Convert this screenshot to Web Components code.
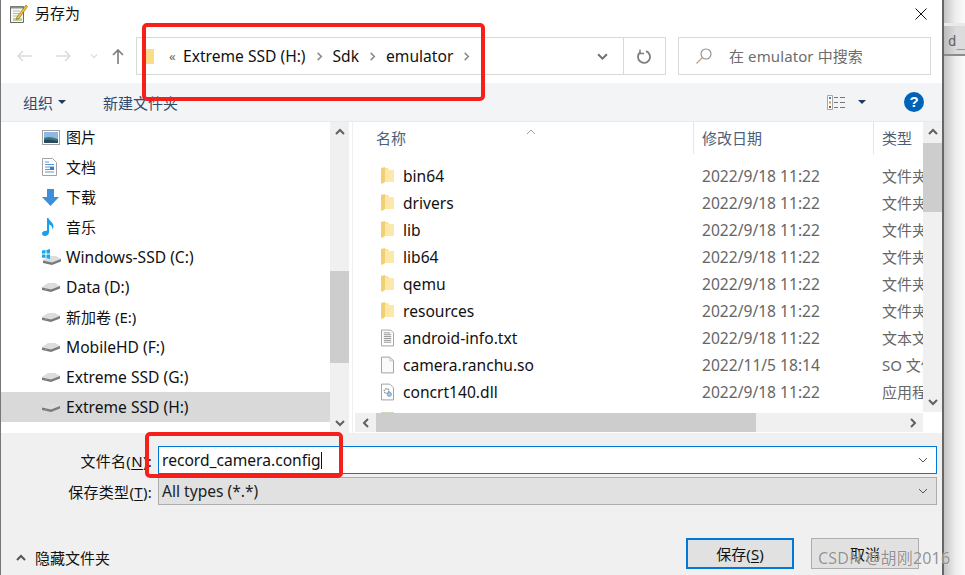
<!DOCTYPE html>
<html lang="zh">
<head>
<meta charset="utf-8">
<title>另存为</title>
<style>
  html, body { margin: 0; height: 100%; background: #fff; overflow: hidden; }
  body { font: 15.6px "Noto Sans", "Noto Sans CJK SC", sans-serif; color: #111; }
</style>
</head>
<body>
<save-dialog>
  <title-bar slot="title">另存为</title-bar>
  <nav-bar slot="nav"></nav-bar>
  <tool-bar slot="tools"></tool-bar>
  <nav-pane slot="pane">
    <nav-item cjk icon="picture">图片</nav-item>
    <nav-item cjk icon="doc">文档</nav-item>
    <nav-item cjk icon="download">下载</nav-item>
    <nav-item cjk icon="music">音乐</nav-item>
    <nav-item icon="windrive">Windows-SSD (C:)</nav-item>
    <nav-item icon="drive">Data (D:)</nav-item>
    <nav-item cjk icon="drive">新加卷 (E:)</nav-item>
    <nav-item icon="drive">MobileHD (F:)</nav-item>
    <nav-item icon="drive">Extreme SSD (G:)</nav-item>
    <nav-item icon="drive" selected>Extreme SSD (H:)</nav-item>
  </nav-pane>
  <file-list slot="files">
    <file-row icon="folder" date="2022/9/18 11:22" kind="文件夹">bin64</file-row>
    <file-row icon="folder" date="2022/9/18 11:22" kind="文件夹">drivers</file-row>
    <file-row icon="folder" date="2022/9/18 11:22" kind="文件夹">lib</file-row>
    <file-row icon="folder" date="2022/9/18 11:22" kind="文件夹">lib64</file-row>
    <file-row icon="folder" date="2022/9/18 11:22" kind="文件夹">qemu</file-row>
    <file-row icon="folder" date="2022/9/18 11:22" kind="文件夹">resources</file-row>
    <file-row icon="text" date="2022/9/18 11:22" kind="文本文档">android-info.txt</file-row>
    <file-row icon="blank" date="2022/11/5 18:14" kind="SO 文件">camera.ranchu.so</file-row>
    <file-row icon="dll" date="2022/9/18 11:22" kind="应用程序扩展">concrt140.dll</file-row>
    <file-row icon="exe"></file-row>
  </file-list>
  <save-form slot="form"></save-form>
</save-dialog>

<script>
// icons are all drawn on small local grids, the size comes from the viewBox
const ICONS = {
  picture: '<svg width="18" height="15" viewBox="0 0 18 15"><rect x=".5" y=".5" width="17" height="14" fill="#fff" stroke="#a3a3a3"/><rect x="2" y="2" width="14" height="11" fill="#8fb9e4"/><path d="M2 8c4-2 8-1 14 1v4H2z" fill="#3c7a73"/><path d="M2 10c4-1 9 0 14 1v2H2z" fill="#28495f"/></svg>',
  doc: '<svg width="15" height="18" viewBox="0 0 15 18"><path d="M.5.5h10l4 4v13H.5z" fill="#fff" stroke="#a3a3a3"/><path d="M3 4h4M3 6.5h9M3 9h9M3 11.5h9M3 14h9" stroke="#5b9bd5"/><path d="M8 9h4v3H8z" fill="#2f7fc9"/></svg>',
  download: '<svg width="17" height="17" viewBox="0 0 17 17"><path d="M5 0h7v8h5l-8.500 9L0 8h5z" fill="#3d8fdb"/></svg>',
  music: '<svg width="13" height="18" viewBox="0 0 13 18"><path d="M5 0h1.500c.5 3 5 4 5 8.500 0 1-.3 2-1 3 .2-3-2-4.500-3.500-5V14c0 2.500-2 4-4 4S0 17 0 15.500 2 12.500 5 12.800z" fill="#18a0ed"/></svg>',
  drive: '<svg width="18" height="10" viewBox="0 0 18 10"><path d="M0 5l6-4h7l5 3v2l-9 3-9-2z" fill="#dcdcdc"/><path d="M0 5.500l9 2 9-3.500v2.500L9 10 0 8z" fill="#7a7a7a"/><path d="M3 7.300l2 .4" stroke="#5fbf57"/></svg>',
  windrive: '<svg width="19" height="16" viewBox="0 0 19 16"><path d="M1 11l6-4h7l5 3v2l-9 3-9-2z" fill="#dcdcdc"/><path d="M1 11.500l9 2 9-3.500v2.500L10 16l-9-2z" fill="#7a7a7a"/><path d="M0 1.500l3.500-.5v3.500H0zM4.500 1L8 0v4.500H4.500zM0 5.500h3.500V9L0 8.500zM4.500 5.500H8V10l-3.500-1z" fill="#14a6ee"/></svg>',
  folder: '<svg width="13" height="17" viewBox="0 0 13 17"><path d="M0 1l4-1v15l-3 2-1-1z" fill="#f3cf72"/><path d="M4 1h3l1 2h5v12H4z" fill="#fbe29b"/><path d="M4 3h9v12H4z" fill="#fde8ac"/></svg>',
  text: '<svg width="14" height="18" viewBox="0 0 14 18"><path d="M.5.500h10l3 3v14H.5z" fill="#fff" stroke="#9a9a9a"/><path d="M3 3.500h7M3 5.500h8M3 7.500h8M3 9.500h8M3 11.500h8M3 13.500h8" stroke="#8d8d8d"/></svg>',
  blank: '<svg width="14" height="18" viewBox="0 0 14 18"><path d="M.5.500h9l4 4v13H.5z" fill="#f9fafb" stroke="#9a9a9a"/><path d="M9.500.500v4h4" fill="none" stroke="#c4c4c4"/></svg>',
  dll: '<svg width="14" height="18" viewBox="0 0 14 18"><path d="M.5.500h9l4 4v13H.5z" fill="#fff" stroke="#9a9a9a"/><circle cx="6" cy="8" r="2.500" fill="none" stroke="#8f8f8f" stroke-width="1.500" stroke-dasharray="1.500 .8"/><circle cx="9" cy="11.500" r="2.200" fill="#a7cbe8" stroke="#6f97b8"/></svg>',
  exe: '<svg width="18" height="17" viewBox="0 0 18 17"><path d="M0 0h18v17H0z" fill="#a9c78d"/></svg>',
  notepad: '<svg width="18" height="19" viewBox="0 0 18 19"><path d="M.5 2.500h13v16H.5z" fill="#f7f7ef" stroke="#6a6a6a"/><path d="M1 2.500h12v2H1z" fill="#8a8f8a"/><path d="M3 14h9v3H3z" fill="#b9d79b"/><path d="M3 7h7M3 9.500h6M3 12h5" stroke="#b9b9b9"/><path d="M7 13l9-12 1.500 1.500-8.500 12-3 1z" fill="#f4c430" stroke="#8a6d1c" stroke-width=".7"/></svg>',
  close: '<svg width="12" height="12" viewBox="0 0 12 12"><path d="M.5.500l11 11M11.500.500l-11 11" stroke="#111" fill="none"/></svg>',
  back: '<svg width="15" height="12" viewBox="0 0 15 12"><path d="M15 6H1M6 1L1 6l5 5" stroke="#dbdbdb" stroke-width="1.500" fill="none"/></svg>',
  forward: '<svg width="15" height="12" viewBox="0 0 15 12"><path d="M0 6h14M9 1l5 5-5 5" stroke="#dbdbdb" stroke-width="1.500" fill="none"/></svg>',
  up: '<svg width="12" height="15" viewBox="0 0 12 15"><path d="M6 15V1M1 6l5-5 5 5" stroke="#7a7a7a" stroke-width="1.600" fill="none"/></svg>',
  refresh: '<svg width="15" height="15" viewBox="0 0 15 15"><path d="M9 2.200A6 6 0 1 1 3.500 3" stroke="#7f7f7f" stroke-width="1.800" fill="none"/><path d="M3 .5v4h4" stroke="#7f7f7f" stroke-width="1.400" fill="none"/></svg>',
  search: '<svg width="16" height="16" viewBox="0 0 16 16"><circle cx="10" cy="6" r="5" fill="none" stroke="#8a8a8a" stroke-width="1.100"/><path d="M6.500 9.500L.5 15.500" stroke="#c9a27a" stroke-width="1.200"/></svg>',
  views: '<svg width="18" height="15" viewBox="0 0 18 15"><path d="M.5.500h5v14h-5z" fill="#fff" stroke="#a5a5a5"/><path d="M2 2h2v2H2z" fill="#4a7fb5"/><path d="M2 6.500h2v2H2z" fill="#b9a030"/><path d="M2 11h2v2H2z" fill="#c0483a"/><path d="M7 2.500h4M13 2.500h5M7 7.500h4M13 7.500h5M7 12.500h4M13 12.500h5" stroke="#777"/></svg>'
};

// chevrons share one path, the direction is a rotation
function chevron(dir, color = '#606060', size = 10, width = 2) {
  const turn = { up: 0, right: 90, down: 180, left: 270 }[dir];
  return `<svg width="${size}" height="${size}" viewBox="0 0 10 10" style="transform:rotate(${turn}deg)"><path d="M1 7l4-4 4 4" fill="none" stroke="${color}" stroke-width="${width}"/></svg>`;
}

function component(tag, html, setup) {
  const template = document.createElement('template');
  template.innerHTML = html;
  customElements.define(tag, class extends HTMLElement {
    connectedCallback() {
      if (this.shadowRoot) return;
      const root = this.attachShadow({ mode: 'open' });
      root.appendChild(template.content.cloneNode(true));
      if (setup) setup(root, this);
    }
  });
}

component('ui-icon', `
  <style>:host { display: inline-flex; flex: none; align-items: center; justify-content: center; } svg { display: block; }</style>
  <span id="s" style="display:contents"></span>
`, (root, el) => {
  root.getElementById('s').innerHTML = ICONS[el.getAttribute('name')] || '';
});

component('scroll-bar', `
  <style>
    :host { display: flex; flex: none; background: #f0f0f0; }
    :host([axis=v]) { flex-direction: column; width: 19px; }
    :host([axis=h]) { flex-direction: row; height: 19px; }
    .btn { flex: none; display: flex; align-items: center; justify-content: center; }
    :host([axis=v]) .btn { height: 20px; }
    :host([axis=h]) .btn { width: 21px; }
    .track { flex: 1; min-width: 0; min-height: 0; display: flex; }
    :host([axis=v]) .track { flex-direction: column; }
    .thumb { background: #cdcdcd; flex: none; }
  </style>
  <div class="btn" id="a"></div>
  <div class="track"><div id="thumb" class="thumb"></div></div>
  <div class="btn" id="b"></div>
`, (root, el) => {
  const vertical = el.getAttribute('axis') === 'v';
  root.getElementById('a').innerHTML = chevron(vertical ? 'up' : 'left');
  root.getElementById('b').innerHTML = chevron(vertical ? 'down' : 'right');
  const thumb = root.getElementById('thumb');
  thumb.style[vertical ? 'marginTop' : 'marginLeft'] = (el.getAttribute('start') || 0) + 'px';
  thumb.style[vertical ? 'height' : 'width'] = el.getAttribute('size') + 'px';
});

component('title-bar', `
  <style>
    :host { display: flex; align-items: center; height: 37px; box-sizing: border-box; padding: 0 15px 11px 9px; font-size: 15px; }
    ui-icon { margin-right: 7px; }
    .t { flex: 1; color: #111; margin-top: -2px; }
    ui-icon.x { margin: 2px 0 0 0; }
  </style>
  <ui-icon name="notepad"></ui-icon>
  <div class="t"><slot></slot></div>
  <ui-icon class="x" name="close"></ui-icon>
`);

component('nav-bar', `
  <style>
    :host { display: flex; align-items: center; height: 38px; padding-left: 16px; margin-bottom: 8px; }
    .b { width: 39px; display: flex; }
    .chev { width: 8px; display:flex; justify-content: center; margin-left: -5px; }
    .up { margin-left: 14px; margin-right: 12px; }
    .addr { width: 530px; height: 38px; box-sizing: border-box; border: 1px solid #d9d9d9; display: flex; align-items: center; }
    .path { flex: 1; display: flex; align-items: center; padding-left: 8px; min-width: 0; }
    .path span { white-space: nowrap; }
    .path svg { display: block; }
    .path .sep { margin: 0 9px; }
    .more { color: #666; font-size: 13px; margin: 0 7px 0 15px; width: 7px; line-height: 1; }
    .drop { width: 41px; display: flex; justify-content: center; margin-right: 0; }
    .refresh { width: 41px; height: 36px; border-left: 1px solid #d9d9d9; display: flex; align-items: center; justify-content: center; }
    .search { width: 253px; height: 38px; box-sizing: border-box; margin-left: 12px; border: 1px solid #d9d9d9; display: flex; align-items: center; padding-left: 17px; color: #6d6d6d; font-size: 15px; letter-spacing: .1px; }
    .search ui-icon { margin-right: 17px; }
    .search span { margin-top: -2px; }
    .fold { width: 9px; height: 15px; background: #fbdd87; flex: none; }
  </style>
  <div class="b"><ui-icon name="back"></ui-icon></div>
  <div class="b"><ui-icon name="forward"></ui-icon></div>
  <div class="chev">${chevron('down', '#dbdbdb', 8, 1.5)}</div>
  <ui-icon class="up" name="up"></ui-icon>
  <div class="addr">
    <div class="path">
      <div class="fold"></div>
      <span class="more">«</span>
      <span>Extreme SSD (H:)</span><span class="sep">${chevron('right', '#8a8a8a', 9, 1.7)}</span>
      <span>Sdk</span><span class="sep">${chevron('right', '#8a8a8a', 9, 1.7)}</span>
      <span>emulator</span><span class="sep">${chevron('right', '#8a8a8a', 9, 1.7)}</span>
    </div>
    <div class="drop">${chevron('down', '#707070', 11, 1.8)}</div>
    <div class="refresh"><ui-icon name="refresh"></ui-icon></div>
  </div>
  <div class="search"><ui-icon name="search"></ui-icon><span>在 emulator 中搜索</span></div>
`);

component('tool-bar', `
  <style>
    :host { display: flex; align-items: center; height: 38px; background: #f3f4f6; padding-left: 22px; border-bottom: 1px solid #e9e9e9; color: #2f4a6d; font-size: 15px; }
    .caret { width: 0; height: 0; border: 4px solid transparent; border-top: 4px solid #223a5f; border-bottom: 0; margin-left: 5px; }
    .org { display: flex; align-items: center; width: 80px; }
    .new { flex: 1; }
    .views { display: flex; align-items: center; }
    .views .caret { margin-left: 13px; }
    .help { width: 20px; height: 20px; border-radius: 50%; background: #0063b8; color: #fff; font: bold 15px/20px "Liberation Sans", sans-serif; text-align: center; margin: 0 18px 0 38px; }
  </style>
  <div class="org">组织<span class="caret"></span></div>
  <div class="new">新建文件夹</div>
  <div class="views"><ui-icon name="views"></ui-icon><span class="caret"></span></div>
  <div class="help">?</div>
`);

component('nav-item', `
  <style>
    :host { display: flex; align-items: center; height: 30px; box-sizing: border-box; padding-left: 41px; color: #111; white-space: nowrap; }
    :host([cjk]) { font-size: 15px; }
    :host([selected]) { background: #d9d9d9; }
    .i { width: 24px; display: flex; flex: none; }
    :host([cjk]) .t { margin-top: -2px; }
  </style>
  <div class="i"><ui-icon id="i"></ui-icon></div>
  <span class="t"><slot></slot></span>
`, (root, el) => {
  const icon = root.getElementById('i');
  icon.setAttribute('name', el.getAttribute('icon'));
  icon.shadowRoot && (icon.shadowRoot.getElementById('s').innerHTML = ICONS[el.getAttribute('icon')]);
});

component('nav-pane', `
  <style>
    :host { display: flex; flex: none; width: 348px; height: 311px; box-sizing: border-box; }
    .items { width: 329px; flex: none; }
    scroll-bar { height: 311px; }
  </style>
  <div class="items"><slot></slot></div>
  <scroll-bar axis="v" start="129" size="92"></scroll-bar>
`);

component('file-row', `
  <style>
    :host { display: grid; grid-template-columns: 341px 180px 49px; height: 27px; align-items: center; white-space: nowrap; flex: none; }
    .n { display: flex; align-items: center; padding-left: 28px; color: #111; }
    .n ui-icon { width: 13px; margin-right: 9px; }
    .d, .k { color: #666; padding-left: 8px; overflow: hidden; }
    .k { font-size: 15px; margin-top: -1px; }
  </style>
  <div class="n"><ui-icon id="i"></ui-icon><slot></slot></div>
  <div class="d" id="d"></div>
  <div class="k" id="k"></div>
`, (root, el) => {
  const icon = root.getElementById('i');
  icon.setAttribute('name', el.getAttribute('icon'));
  icon.shadowRoot && (icon.shadowRoot.getElementById('s').innerHTML = ICONS[el.getAttribute('icon')]);
  root.getElementById('d').textContent = el.getAttribute('date');
  root.getElementById('k').textContent = el.getAttribute('kind');
});

component('file-list', `
  <style>
    :host { display: flex; flex-direction: column; flex: 1; min-width: 0; height: 311px; }
    .top { display: flex; height: 291px; flex: none; }
    .list { width: 570px; flex: none; overflow: hidden; display: flex; flex-direction: column; }
    .head { display: grid; grid-template-columns: 341px 180px 49px; height: 32px; flex: none; color: #4c607a; position: relative; margin-bottom: 8px; font-size: 15px; }
    .head div { display: flex; align-items: center; padding: 0 0 1px 8px; }
    .head div + div { border-left: 1px solid #e5e5e5; margin-left: -1px; }
    .head div:first-child { padding-left: 23px; }
    .sort { position: absolute; left: 173px; top: -1px; }
    .top scroll-bar { height: 290px; }
    .bottom { display: flex; padding-left: 2px; }
    .bottom scroll-bar { width: 568px; }
  </style>
  <div class="top">
    <div class="list">
      <div class="head"><div>名称</div><div>修改日期</div><div>类型</div><span class="sort">${chevron('up', '#9a9a9a', 10, 1)}</span></div>
      <slot></slot>
    </div>
    <scroll-bar axis="v" start="1" size="69"></scroll-bar>
  </div>
  <div class="bottom"><scroll-bar axis="h" start="0" size="380"></scroll-bar></div>
`);

component('save-form', `
  <style>
    :host { display: block; height: 142px; background: #f0f0f0; box-sizing: border-box; padding-top: 13px; }
    .row { display: grid; grid-template-columns: 151px 779px; column-gap: 6px; align-items: center; margin-bottom: 3px; }
    .row label { text-align: right; color: #111; white-space: nowrap; font-size: 15px; letter-spacing: .3px; }
    .box { height: 28px; box-sizing: border-box; border: 1px solid #0078d7; background: #fff; display: flex; align-items: center; padding: 0 8px 0 3px; color: #111; }
    .box.combo { border-color: #adadad; background: #e1e1e1; color: #222; }
    .box span { flex: 1; }
    .caret { width: 1px; height: 17px; background: #111; display: inline-block; vertical-align: -3px; }
    .foot { display: flex; align-items: center; margin-top: 33px; padding-left: 15px; font-size: 15px; }
    .toggle { display: flex; align-items: center; gap: 9px; flex: 1; color: #111; margin-top: 8px; }
    .btn { width: 108px; height: 31px; box-sizing: border-box; border: 1px solid #adadad; background: #e1e1e1; display: flex; align-items: center; justify-content: center; color: #111; }
    .btn.primary { border: 2px solid #0078d7; margin-right: 17px; }
    .buttons { display: flex; margin-right: 23px; }
    u { text-underline-offset: 2px; }
  </style>
  <div class="row">
    <label>文件名(<u>N</u>):</label>
    <div class="box"><span>record_camera.config<i class="caret"></i></span>${chevron('down', '#555', 10, 1)}</div>
  </div>
  <div class="row">
    <label>保存类型(<u>T</u>):</label>
    <div class="box combo"><span>All types (*.*)</span>${chevron('down', '#555', 10, 1)}</div>
  </div>
  <div class="foot">
    <div class="toggle">${chevron('up', '#555', 10, 2)}<span>隐藏文件夹</span></div>
    <div class="buttons">
      <div class="btn primary"><span>保存(<u>S</u>)</span></div>
      <div class="btn">取消</div>
    </div>
  </div>
`);

component('save-dialog', `
  <style>
    :host { display: flex; width: 965px; height: 575px; overflow: hidden; position: relative; background: #fff; }
    .win { width: 944px; flex: none; box-sizing: border-box; border-left: 1px solid #777; border-right: 2px solid #666; display: flex; flex-direction: column; background: #fff; }
    .main { display: flex; }
    .gap { width: 4px; flex: none; box-sizing: border-box; border-right: 1px solid #f0f0f0; }
    .behind { flex: 1; background: linear-gradient(90deg, #c4c4c4, #eee 55%, #fafafa); padding-top: 23px; }
    .tab { height: 33px; box-sizing: border-box; background: linear-gradient(90deg, #bdbdbd, #dcdcdc 60%); border-top: 3px solid #eaeaea; border-bottom: 2px solid #8c8c8c; font: 14px "DejaVu Sans Mono", monospace; color: #666; line-height: 30px; padding-left: 4px; white-space: nowrap; overflow: hidden; }
    .mark { position: absolute; border: 4px solid #f5201c; border-radius: 5px; box-sizing: border-box; pointer-events: none; }
    .m1 { left: 142px; top: 23px; width: 343px; height: 78px; }
    .m2 { left: 145px; top: 432px; width: 198px; height: 46px; }
    .water { position: absolute; left: 818px; top: 545px; font-size: 16px; color: rgba(110,110,110,.75); text-shadow: 0 0 1px #fff; white-space: nowrap; letter-spacing: .2px; }
  </style>
  <div class="win">
    <slot name="title"></slot>
    <slot name="nav"></slot>
    <slot name="tools"></slot>
    <div class="main">
      <slot name="pane"></slot>
      <div class="gap"></div>
      <slot name="files"></slot>
    </div>
    <slot name="form"></slot>
  </div>
  <div class="behind"><div class="tab">d_</div></div>
  <div class="mark m1"></div>
  <div class="mark m2"></div>
  <div class="water">CSDN @胡刚2016</div>
`);
</script>
</body>
</html>
